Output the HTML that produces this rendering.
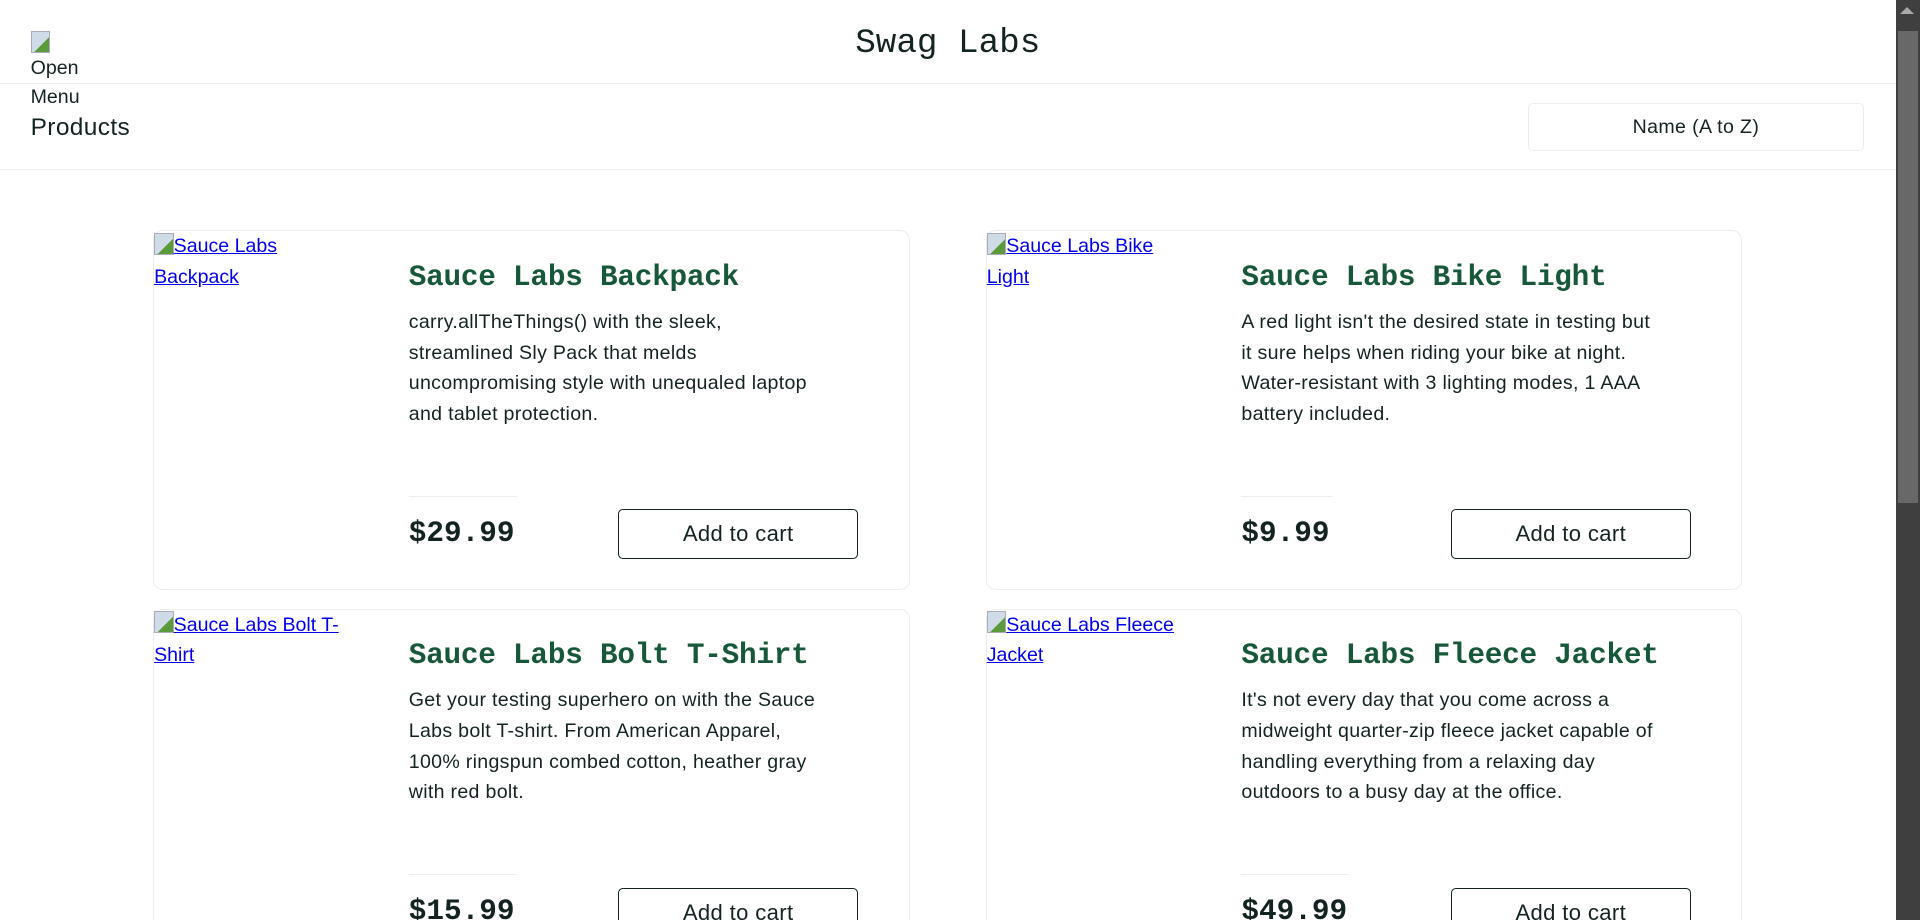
<!DOCTYPE html>
<html><head><style>
html,body{margin:0;padding:0;width:1920px;height:920px;overflow:hidden;background:#fff}
#w{zoom:1.2245;width:1568px;height:751px;position:relative;overflow:hidden;font-family:"Liberation Sans",sans-serif;color:#132322}
.a{position:absolute}
.hl{position:absolute;left:0;width:1548px;height:1px;background:#ededed}
.card{position:absolute;width:618px;height:294px;border:1px solid #ededed;border-radius:8px;box-sizing:border-box}
.lnk{position:absolute;left:0;top:0;width:168px;font-size:16px;line-height:25px;color:#0000ee;text-decoration:underline}
.ic{display:inline-block;width:16px;height:18px;vertical-align:-2px;background:linear-gradient(135deg,#cfdbe6 60%,#5a9a3a 60%);border:1px solid #aab;box-sizing:border-box}
.t{position:absolute;left:208px;top:24px;font-family:"Liberation Mono",monospace;font-size:24px;color:#18583a;font-weight:bold;white-space:nowrap;letter-spacing:-0.2px}
.d{position:absolute;left:208px;top:62px;width:345px;font-size:16px;line-height:25px;letter-spacing:0.25px}
.dv{position:absolute;left:208px;top:216px;width:88px;height:1px;background:#ededed}
.p{position:absolute;left:208px;top:233px;font-family:"Liberation Mono",monospace;font-size:24px;font-weight:bold}
.b{position:absolute;left:379px;top:227px;width:196px;height:41px;border:1px solid #132322;border-radius:4px;box-sizing:border-box;font-size:18px;text-align:center;line-height:39px;letter-spacing:0.3px}
</style></head><body><div id="w">
<div class="a" style="left:0;top:20px;width:1548px;text-align:center;font-family:'Liberation Mono',monospace;font-size:28px">Swag Labs</div>
<div class="a" style="left:25px;top:25px;font-size:16px;line-height:24px"><span class="ic" style="display:block;margin-bottom:1px"></span>Open<br>Menu</div>
<div class="hl" style="top:68px"></div>
<div class="a" style="left:25px;top:93px;font-size:20px;letter-spacing:0.3px">Products</div>
<div class="a" style="left:1248px;top:84px;width:274px;height:39px;border:1px solid #ededed;border-radius:4px;box-sizing:border-box;text-align:center;line-height:39px;font-size:16px;letter-spacing:0.3px">Name (A to Z)</div>
<div class="hl" style="top:138px"></div>

<div class="card" style="left:125px;top:188px"><div class="lnk" style="width:150px"><span class="ic"></span>Sauce Labs Backpack</div><div class="t">Sauce Labs Backpack</div><div class="d">carry.allTheThings() with the sleek, streamlined Sly Pack that melds uncompromising style with unequaled laptop and tablet protection.</div><div class="dv"></div><div class="p">$29.99</div><div class="b">Add to cart</div></div>
<div class="card" style="left:805px;top:188px"><div class="lnk" style="width:150px"><span class="ic"></span>Sauce Labs Bike Light</div><div class="t">Sauce Labs Bike Light</div><div class="d">A red light isn't the desired state in testing but it sure helps when riding your bike at night. Water-resistant with 3 lighting modes, 1 AAA battery included.</div><div class="dv" style="width:74px"></div><div class="p">$9.99</div><div class="b">Add to cart</div></div>
<div class="card" style="left:125px;top:497px"><div class="lnk"><span class="ic"></span>Sauce Labs Bolt T-Shirt</div><div class="t">Sauce Labs Bolt T-Shirt</div><div class="d">Get your testing superhero on with the Sauce Labs bolt T-shirt. From American Apparel, 100% ringspun combed cotton, heather gray with red bolt.</div><div class="dv"></div><div class="p">$15.99</div><div class="b">Add to cart</div></div>
<div class="card" style="left:805px;top:497px"><div class="lnk"><span class="ic"></span>Sauce Labs Fleece Jacket</div><div class="t">Sauce Labs Fleece Jacket</div><div class="d">It's not every day that you come across a midweight quarter-zip fleece jacket capable of handling everything from a relaxing day outdoors to a busy day at the office.</div><div class="dv"></div><div class="p">$49.99</div><div class="b">Add to cart</div></div>

<div class="a" style="left:1548px;top:0;width:20px;height:751px;background:#3f3f3f"></div>
<div class="a" style="left:1552px;top:6px;width:0;height:0;border-left:6px solid transparent;border-right:6px solid transparent;border-bottom:6px solid #aaa"></div>
<div class="a" style="left:1550px;top:25px;width:16px;height:386px;background:#686868"></div>
</div></body></html>
